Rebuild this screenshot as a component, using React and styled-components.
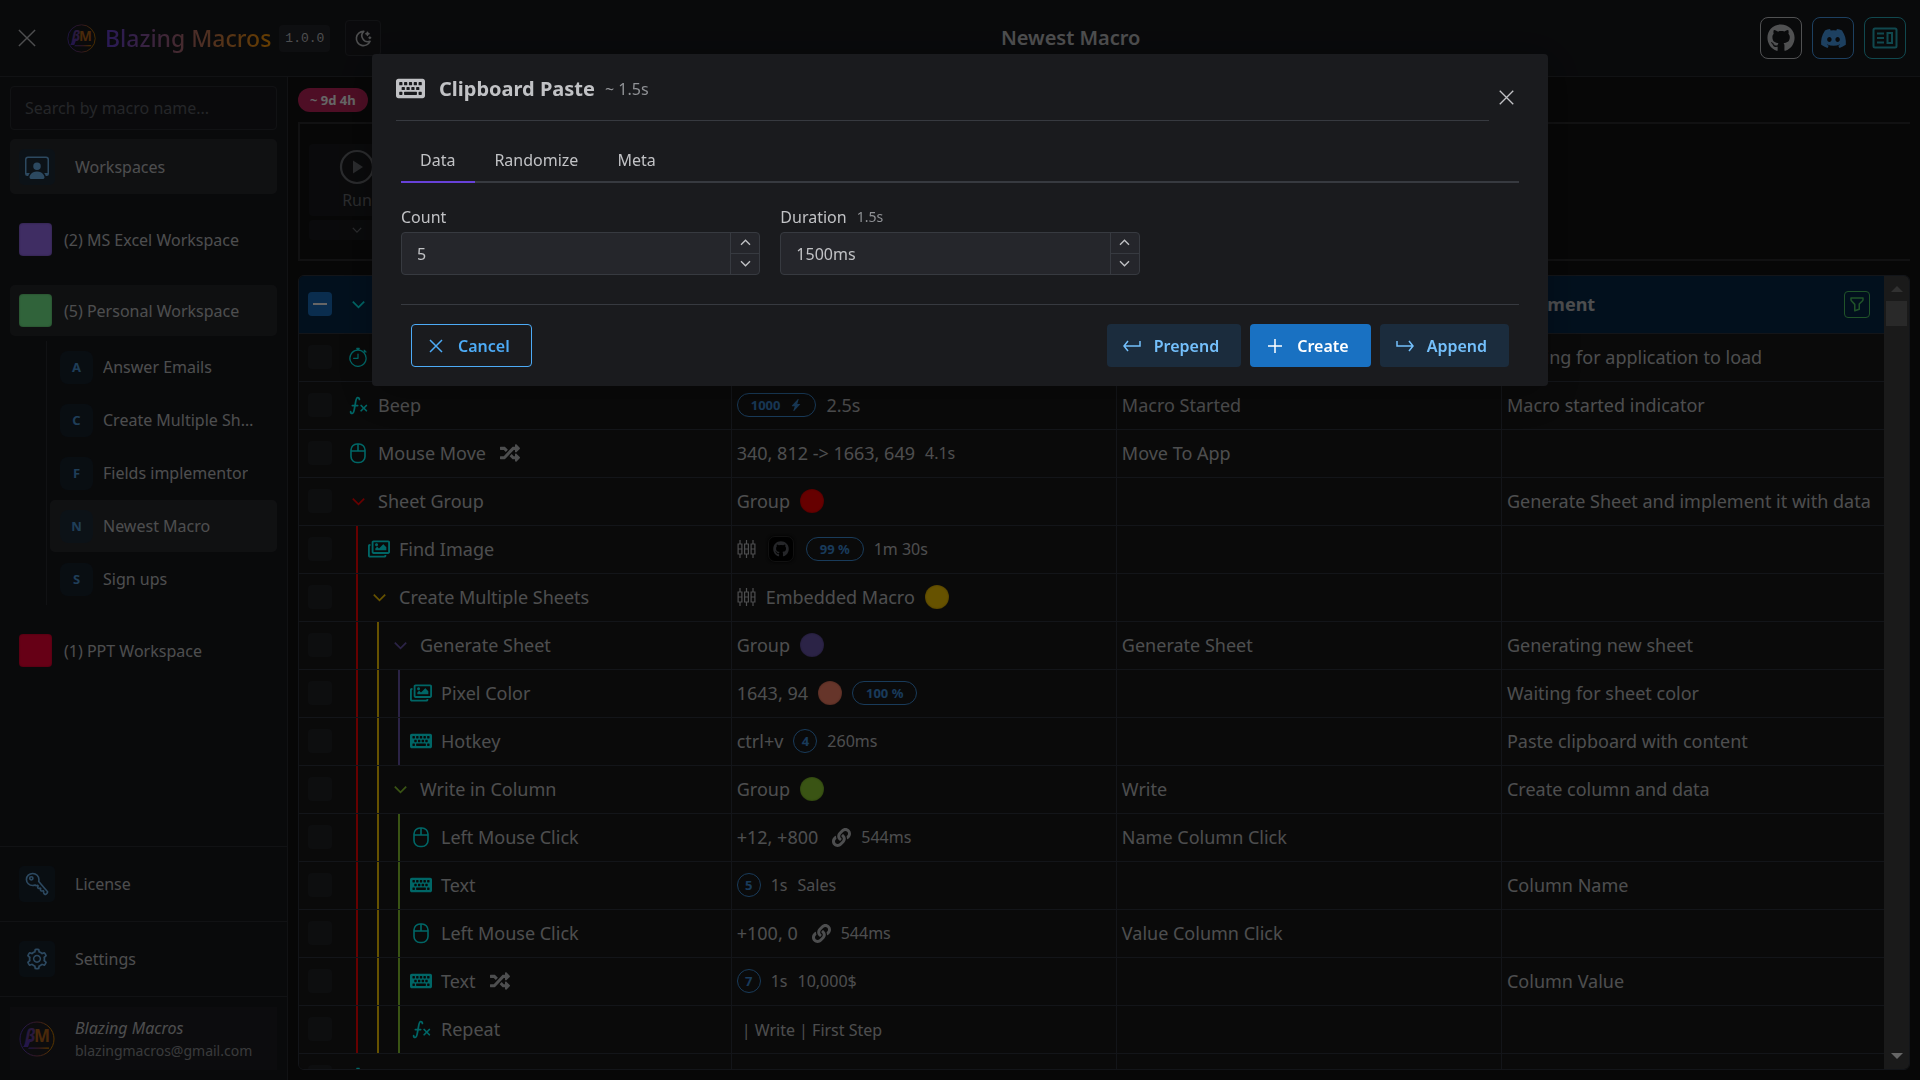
import React from "react";
import styled, { createGlobalStyle, css } from "styled-components";
import { FaGithub, FaDiscord, FaKeyboard, FaRegImages, FaRandom, FaLink } from "react-icons/fa";
import { BsStopwatch, BsPersonWorkspace, BsLightningChargeFill } from "react-icons/bs";
import { TbMathFunction, TbFilter, TbMoonStars } from "react-icons/tb";
import { IoKeyOutline } from "react-icons/io5";
import { AiOutlineSetting } from "react-icons/ai";

const c = {
  text: "#c1c2c5",
  dim: "#909296",
  panel: "#1a1b1e",
  page: "#121212",
  side: "#17191d",
  line: "#2c2e33",
  grid: "#30353f",
  field: "#25262b",
  edge: "#373a40",
  teal: "#00ffff",
  blue: "#4dabf6",
};

const Global = createGlobalStyle`
  *, *::before, *::after { box-sizing: border-box; }
  body { margin: 0; background: ${c.page}; color: ${c.text}; font: 16px/24px "Noto Sans", "Open Sans", sans-serif; }
  button, input { font: inherit; color: inherit; }
  button { cursor: pointer; padding: 0; border: 0; background: none; }
  h1, h2, p { margin: 0; }
  svg { display: block; flex: none; }
`;

const Shell = styled.div`
  display: flex;
  flex-direction: column;
  height: 100vh;
  overflow: hidden;
`;

const Header = styled.header`
  display: grid;
  grid-template-columns: auto 1fr auto;
  align-items: center;
  flex: none;
  height: 77px;
  padding: 0 14px 0 18px;
  background: ${c.side};
  border-bottom: 1px solid ${c.line};
`;

const Brand = styled.div`
  display: flex;
  align-items: center;
  white-space: nowrap;
`;

const PlainButton = styled.button`
  display: grid;
  place-items: center;
  margin-right: ${(p) => p.$after || 0}px;
`;

const BrandName = styled.span`
  margin: 0 8px 0 9px;
  font: 500 23px/32px "Noto Sans", sans-serif;
  background: linear-gradient(90deg, #6741d9, #ff9900);
  background-clip: text;
  color: transparent;
`;

const Version = styled.code`
  padding: 0 6px;
  border-radius: 4px;
  background: ${c.field};
  font: 13px/27px "Liberation Mono", monospace;
`;

const ThemeButton = styled.button`
  display: grid;
  place-items: center;
  flex: none;
  width: 36px;
  height: 36px;
  margin-left: 15px;
  border: 1px solid ${c.line};
  border-radius: 4px;
  background: ${c.panel};
`;

const PageTitle = styled.h1`
  justify-self: center;
  font-size: 20px;
  line-height: 28px;
  font-weight: 600;
`;

const Socials = styled.nav`
  display: flex;
  gap: 10px;
`;

const Social = styled.a`
  display: grid;
  place-items: center;
  width: 42px;
  height: 42px;
  border: 1px solid currentColor;
  border-radius: 8px;
  color: ${(p) => p.$tone};
`;

const Body = styled.div`
  display: grid;
  grid-template-columns: 288px minmax(0, 1fr);
  flex: 1;
  min-height: 0;
`;

const Sidebar = styled.aside`
  display: flex;
  flex-direction: column;
  min-height: 0;
  background: ${c.side};
  border-right: 1px solid ${c.line};
`;

const SideTop = styled.div`
  display: flex;
  flex-direction: column;
  flex: 1;
  padding: 9px 10px;
`;

const Search = styled.input`
  width: 100%;
  height: 44px;
  padding: 0 14px;
  border: 1px solid ${c.line};
  border-radius: 4px;
  background: ${c.panel};
  outline: 0;
  &::placeholder { color: #5c5f66; opacity: 1; }
`;

const SideLink = styled.button`
  display: flex;
  align-items: center;
  gap: 20px;
  width: 100%;
  height: ${(p) => p.$h || 36}px;
  padding: 0 9px;
  border-radius: 5px;
  background: ${(p) => (p.$on ? "#2a2b2e" : "none")};
  text-align: left;
`;

const IconTile = styled.span`
  display: grid;
  place-items: center;
  width: 36px;
  height: 36px;
  border-radius: 5px;
  background: ${(p) => (p.$on ? "#1f2d3a" : "#17232f")};
  color: #6fb6f0;
`;

const KeyIcon = styled(IoKeyOutline)`
  transform: scaleX(-1);
`;

const Workspaces = styled.div`
  display: flex;
  flex-direction: column;
  gap: 20px;
  margin-top: 9px;
`;

const Workspace = styled.button`
  display: flex;
  align-items: center;
  gap: 12px;
  width: 100%;
  height: 51px;
  padding: 0 9px;
  border-radius: 5px;
  background: ${(p) => (p.$on ? "#27282c" : "none")};
  text-align: left;
`;

const Swatch = styled.span`
  width: 33px;
  height: 33px;
  border-radius: 4px;
  background: ${(p) => p.$tone};
  box-shadow: inset 0 0 2px rgba(0, 0, 0, 0.4);
`;

const Macros = styled.div`
  display: flex;
  flex-direction: column;
  gap: 1px;
  margin: 5px 0 0 36px;
  padding-left: 3px;
  border-left: 1px solid ${c.line};
`;

const Macro = styled.button`
  display: flex;
  align-items: center;
  gap: 10px;
  height: 52px;
  padding: 0 15px 0 10px;
  border-radius: 5px;
  background: ${(p) => (p.$on ? "#2a2b2e" : "none")};
  text-align: left;
`;

const Letter = styled.span`
  flex: none;
  width: 33px;
  border-radius: 8px;
  background: ${(p) => (p.$on ? "#1f2d3a" : "#17232f")};
  color: #4f9bdc;
  font-size: 13px;
  line-height: 33px;
  font-weight: 700;
  text-align: center;
`;

const Clip = styled.span`
  overflow: hidden;
  text-overflow: ellipsis;
  white-space: nowrap;
`;

const SideFoot = styled.div`
  padding: ${(p) => p.$pad};
  border-top: 1px solid ${c.line};
`;

const Account = styled.div`
  display: flex;
  align-items: center;
  gap: 20px;
  height: 63px;
  padding: 0 9px;
  background: #1f2023;
`;

const AccountText = styled.div`
  display: flex;
  flex-direction: column;
`;

const AccountName = styled.span`
  font-style: italic;
  line-height: 24px;
`;

const AccountMail = styled.span`
  font-size: 14px;
  line-height: 22px;
  color: ${c.dim};
`;

const Main = styled.main`
  display: flex;
  flex-direction: column;
  min-height: 0;
  padding: 11px 10px 10px;
`;

const TotalBadge = styled.span`
  align-self: flex-start;
  padding: 0 12px;
  border-radius: 12px;
  background: #c2255c;
  color: #fff;
  font-size: 13px;
  line-height: 24px;
  font-weight: 700;
`;

const Toolbar = styled.div`
  flex: none;
  display: flex;
  margin: 10px 0 14px;
  padding: 20px 9px 19px;
  border: solid #2c2c2e;
  border-width: 2px 0 2px 2px;
`;

const RunGroup = styled.div`
  display: flex;
  flex-direction: column;
  gap: 4px;
  width: 96px;
  color: #6b6d72;
`;

const RunButton = styled.button`
  display: flex;
  flex-direction: column;
  align-items: center;
  gap: 3px;
  height: 72px;
  padding-top: 5px;
  border-radius: 4px;
  background: ${c.panel};
`;

const RunMore = styled.button`
  display: grid;
  place-items: center;
  height: 20px;
  border-radius: 4px;
  background: ${c.panel};
`;

const TableFrame = styled.div`
  display: flex;
  flex: 1;
  min-height: 0;
  border: 1px solid ${c.grid};
  border-radius: 6px;
  overflow: hidden;
`;

const TableView = styled.div`
  flex: 1;
  min-width: 0;
  overflow: hidden;
`;

const Table = styled.table`
  width: 100%;
  table-layout: fixed;
  border-collapse: separate;
  border-spacing: 0;
  font-size: 18px;
  background: #191919;
`;

const cell = css`
  padding: 0;
  border-bottom: 1px solid ${c.grid};
  border-right: 1px solid ${c.grid};
  &:last-child { border-right: 0; }
`;

const Th = styled.th`
  ${cell}
  height: 58px;
  background: #07294a;
  font-weight: 700;
  text-align: left;
`;

const Td = styled.td`
  ${cell}
  height: 48px;
`;

const Line = styled.div`
  display: flex;
  align-items: center;
  gap: 10px;
  height: ${(p) => p.$h || 47}px;
  padding: 0 0 1px 5px;
  overflow: hidden;
  white-space: nowrap;
  line-height: 22px;
`;

const NameLine = styled(Line)`
  gap: 0;
  padding-left: 9px;
`;

const Check = styled.input`
  appearance: none;
  display: grid;
  place-items: center;
  flex: none;
  width: 24px;
  height: 24px;
  margin: 0 15px 0 0;
  border-radius: 4px;
  background: ${(p) => (p.$part ? "#1971c2" : "#222327")};
  &::before {
    content: "";
    width: 14px;
    height: 2px;
    background: ${(p) => (p.$part ? "#fff" : "transparent")};
  }
`;

const Guide = styled.span`
  align-self: stretch;
  flex: none;
  width: 21px;
  margin-bottom: -1px;
  padding-left: 9px;
  &::before {
    content: "";
    display: block;
    width: 2px;
    height: 100%;
    background: ${(p) => p.$tone};
  }
`;

const Slot = styled.span`
  display: grid;
  place-items: center;
  flex: none;
  width: 22px;
  margin-right: 9px;
  color: ${(p) => p.$tone || c.teal};
`;

const After = styled.span`
  margin-left: ${(p) => p.$gap}px;
`;

const Dot = styled.span`
  width: 24px;
  height: 24px;
  border-radius: 50%;
  background: ${(p) => p.$tone};
  box-shadow: inset 0 0 2px rgba(0, 0, 0, 0.4);
`;

const Pill = styled.span`
  display: flex;
  align-items: center;
  justify-content: center;
  gap: 10px;
  min-width: 24px;
  height: 24px;
  padding: 0 ${(p) => (p.$round ? 0 : 13)}px;
  border: 1px solid #3f93e0;
  border-radius: 12px;
  color: #3f93e0;
  font-size: 13px;
  font-weight: 700;
`;

const Small = styled.span`
  font-size: 16px;
`;

const Shot = styled.span`
  display: grid;
  place-items: center;
  width: 26px;
  height: 26px;
  margin: 0 2px;
  border-radius: 7px;
  border: 1px solid #2b2b2b;
  background: #000;
  color: #5d6066;
  box-shadow: 0 0 3px #000;
`;

const HeadEnd = styled.button`
  display: grid;
  place-items: center;
  width: 26px;
  height: 27px;
  margin: 0 14px 0 auto;
  border: 1px solid #51cf66;
  border-radius: 4px;
  color: #51cf66;
`;

const ScrollTrack = styled.div`
  display: flex;
  flex-direction: column;
  align-items: center;
  justify-content: space-between;
  width: 25px;
  padding: 10px 0;
  background: #424242;
`;

const ScrollHead = styled.div`
  display: flex;
  flex-direction: column;
  align-items: center;
  gap: 9px;
`;

const Thumb = styled.div`
  width: 21px;
  height: 25px;
  background: #686868;
`;

const Arrow = styled.div`
  border: 6px solid transparent;
  border-width: ${(p) => (p.$down ? "6px 6px 0" : "0 6px 6px")};
  border-color: ${(p) => (p.$down ? "#fff transparent transparent" : "transparent transparent #7a7a7a")};
`;

const Overlay = styled.div`
  position: fixed;
  inset: 0;
  display: flex;
  align-items: flex-start;
  justify-content: center;
  padding: 5vh 16px;
  background: rgba(0, 0, 0, 0.6);
`;

const Modal = styled.section`
  width: 100%;
  max-width: 1176px;
  padding: 0 24px 19px;
  border-radius: 4px;
  background: ${c.panel};
  box-shadow: 0 10px 40px rgba(0, 0, 0, 0.25);
`;

const ModalTop = styled.div`
  display: flex;
  align-items: center;
  gap: 10px;
  padding-top: 19px;
`;

const ModalHead = styled.div`
  display: flex;
  align-items: center;
  gap: 10px;
  flex: 1;
  height: 48px;
  padding-bottom: 16px;
  border-bottom: 1px solid ${c.edge};
`;

const ModalTitle = styled.h2`
  margin-left: 4px;
  font-size: 20px;
  line-height: 28px;
  font-weight: 700;
`;

const ModalBody = styled.div`
  padding: 0 5px;
`;

const Tabs = styled.div`
  display: flex;
  margin-top: 18px;
  border-bottom: 2px solid ${c.edge};
`;

const Tab = styled.button`
  height: 44px;
  margin-bottom: -2px;
  padding: 0 20px 0 19px;
  border-bottom: 2px solid ${(p) => (p.$on ? "#6741d9" : "transparent")};
`;

const Fields = styled.div`
  display: grid;
  grid-template-columns: repeat(3, minmax(0, 1fr));
  gap: 20px;
  padding: 22px 0 29px;
  border-bottom: 1px solid ${c.edge};
`;

const FieldLabel = styled.label`
  display: flex;
  align-items: center;
  gap: 10px;
  height: 24px;
  margin-bottom: 3px;
`;

const Hint = styled.span`
  color: ${c.dim};
  font-size: ${(p) => p.$size || 14}px;
`;

const NumberBox = styled.div`
  display: flex;
  height: 43px;
  border: 1px solid ${c.edge};
  border-radius: 4px;
  background: ${c.field};
`;

const NumberInput = styled.input`
  flex: 1;
  min-width: 0;
  padding: 0 15px;
  border: 0;
  outline: 0;
  background: none;
`;

const Steps = styled.div`
  display: grid;
  grid-template-rows: 1fr 1fr;
  width: 29px;
  border-left: 1px solid ${c.edge};
`;

const Step = styled.button`
  display: grid;
  place-items: center;
  &:first-child { border-bottom: 1px solid ${c.edge}; }
`;

const Actions = styled.div`
  display: flex;
  gap: 9px;
  padding: 19px 10px 0;
`;

const tones = {
  outline: css`border-color: ${c.blue}; color: ${c.blue}; margin-right: auto;`,
  light: css`background: #1b2c3d; color: #74c0fc;`,
  filled: css`background: #1971c2; color: #fff;`,
};

const Action = styled.button`
  display: flex;
  align-items: center;
  gap: 12px;
  height: 43px;
  padding: 0 21px 0 14px;
  border: 1px solid transparent;
  border-radius: 4px;
  font-weight: 600;
  ${(p) => tones[p.$tone]}
`;

const Stroke = ({ d, size = 20, width = 1.5 }) => (
  <svg width={size} height={size} viewBox="0 0 20 20" fill="none" stroke="currentColor" strokeWidth={width}>
    <path d={d} />
  </svg>
);
const Chevron = ({ size = 20, up, width = 1.8 }) => (
  <Stroke size={size} width={width} d={up ? "M4 13l6-6 6 6" : "M4 7l6 6 6-6"} />
);

const Logo = ({ size, id }) => (
  <svg width={size} height={size} viewBox="0 0 36 36">
    <defs>
      <linearGradient id={id}>
        <stop offset="0.1" stopColor="#5a38b8" />
        <stop offset="0.5" stopColor="#8a3f5a" />
        <stop offset="0.9" stopColor="#d98200" />
      </linearGradient>
    </defs>
    <circle cx="18" cy="18" r="17" fill="none" stroke={`url(#${id})`} strokeWidth="1" />
    <g fontFamily="Noto Sans" fontWeight="700" fontSize="17">
      <text x="6" y="21" fontStyle="italic" fill="#68409a">β</text>
      <text x="15" y="21" fill="#b8661a">M</text>
      <path d="M4 26l6-8h2l-3 8z" fill="#5a38b8" />
      <path d="M10 26.500h20v1.200H9z" fill={`url(#${id})`} />
    </g>
  </svg>
);

const MouseIcon = () => (
  <svg width="22" height="22" viewBox="0 0 22 22" fill="none" stroke="currentColor" strokeWidth="1.600">
    <rect x="4" y="2" width="14" height="18.500" rx="6" />
    <path d="M4 9h14M11 2v7" />
  </svg>
);

const NewsIcon = () => (
  <svg width="26" height="22" viewBox="0 0 26 22" fill="none" stroke="currentColor" strokeWidth="2">
    <rect x="1.500" y="1.500" width="23" height="19" rx="1.500" />
    <rect x="15.500" y="6" width="4.500" height="10" />
    <path d="M5 6.500h7M5 11h7M5 15.500h7" />
  </svg>
);

const KnobsIcon = () => (
  <svg width="19" height="18" viewBox="0 0 19 18" fill="none" stroke="currentColor" strokeWidth="1.200">
    {[3, 9.5, 16].map((x) => (
      <path key={x} d={`M${x} 0v4M${x} 14v4M${x - 1.9} 4h3.800v10h-3.800zM${x - 1.9} 9h3.800`} />
    ))}
  </svg>
);

const RunIcon = () => (
  <svg width="36" height="36" viewBox="0 0 36 36">
    <circle cx="18" cy="18" r="16" fill="none" stroke="currentColor" strokeWidth="2.200" />
    <path d="M14 11.500v13l10-6.500z" fill="currentColor" />
  </svg>
);

const red = "#ff0000", gold = "#ffcc00", violet = "#6c58b0", lime = "#91d232";
const icons = {
  wait: <BsStopwatch size={20} />,
  fx: <TbMathFunction size={21} />,
  mouse: <MouseIcon />,
  image: <FaRegImages size={22} />,
  keys: <FaKeyboard size={22} />,
  fold: <Chevron size={19} />,
};
const Shuffle = () => <After $gap={14}><FaRandom size={20} /></After>;

const rows = [
  { icon: "wait", note: "Waiting for application to load" },
  { icon: "fx", name: "Beep", data: <><Pill>1000 <BsLightningChargeFill size={12} /></Pill>2.5s</>, label: "Macro Started", note: "Macro started indicator" },
  { icon: "mouse", name: "Mouse Move", random: true, data: <>340, 812 -&gt; 1663, 649 <Small>4.1s</Small></>, label: "Move To App" },
  { icon: "fold", tone: red, name: "Sheet Group", data: <>Group <Dot $tone={red} /></>, note: "Generate Sheet and implement it with data" },
  { icon: "image", guides: [red], name: "Find Image", data: <><KnobsIcon /><Shot><FaGithub size={16} /></Shot><Pill>99 %</Pill><Small>1m 30s</Small></> },
  { icon: "fold", tone: gold, guides: [red], name: "Create Multiple Sheets", data: <><KnobsIcon />Embedded Macro <Dot $tone={gold} /></> },
  { icon: "fold", tone: violet, guides: [red, gold], name: "Generate Sheet", data: <>Group <Dot $tone={violet} /></>, label: "Generate Sheet", note: "Generating new sheet" },
  { icon: "image", guides: [red, gold, violet], name: "Pixel Color", data: <>1643, 94 <Dot $tone="#ff8569" /><Pill>100 %</Pill></>, note: "Waiting for sheet color" },
  { icon: "keys", guides: [red, gold, violet], name: "Hotkey", data: <>ctrl+v <Pill $round>4</Pill><Small>260ms</Small></>, note: "Paste clipboard with content" },
  { icon: "fold", tone: lime, guides: [red, gold], name: "Write in Column", data: <>Group <Dot $tone={lime} /></>, label: "Write", note: "Create column and data" },
  { icon: "mouse", guides: [red, gold, lime], name: "Left Mouse Click", data: <>+12, +800 <After $gap={4}><FaLink size={19} /></After><Small>544ms</Small></>, label: "Name Column Click" },
  { icon: "keys", guides: [red, gold, lime], name: "Text", data: <><Pill $round>5</Pill><Small>1s</Small><Small>Sales</Small></>, note: "Column Name" },
  { icon: "mouse", guides: [red, gold, lime], name: "Left Mouse Click", data: <>+100, 0 <After $gap={4}><FaLink size={19} /></After><Small>544ms</Small></>, label: "Value Column Click" },
  { icon: "keys", guides: [red, gold, lime], name: "Text", random: true, data: <><Pill $round>7</Pill><Small>1s</Small><Small>10,000$</Small></>, note: "Column Value" },
  { icon: "fx", guides: [red, gold, lime], name: "Repeat", data: <After $gap={5}><Small>| Write | First Step</Small></After> },
  { icon: "wait" },
];

const macros = ["Answer Emails", "Create Multiple Sheets", "Fields implementor", "Newest Macro", "Sign ups"];

const NumberField = ({ id, label, hint, value }) => (
  <div>
    <FieldLabel htmlFor={id}>{label}{hint && <Hint>{hint}</Hint>}</FieldLabel>
    <NumberBox>
      <NumberInput id={id} defaultValue={value} />
      <Steps>
        <Step aria-label={`Increase ${label}`}><Chevron size={15} up /></Step>
        <Step aria-label={`Decrease ${label}`}><Chevron size={15} /></Step>
      </Steps>
    </NumberBox>
  </div>
);

export default function App() {
  return (
    <>
      <Global />
      <Shell>
        <Header>
          <Brand>
            <PlainButton $after={31} aria-label="Close menu"><Stroke size={18} width={1.6} d="M1 1l18 18M19 1L1 19" /></PlainButton>
            <Logo size={29} id="logoTop" />
            <BrandName>Blazing Macros</BrandName>
            <Version>1.0.0</Version>
            <ThemeButton aria-label="Dark theme"><TbMoonStars size={19} /></ThemeButton>
          </Brand>
          <PageTitle>Newest Macro</PageTitle>
          <Socials>
            <Social href="#github" aria-label="GitHub" $tone="#c9cbce"><FaGithub size={28} /></Social>
            <Social href="#discord" aria-label="Discord" $tone="#4aa0f0"><FaDiscord size={27} /></Social>
            <Social href="#docs" aria-label="Docs" $tone="#2ab5c4"><NewsIcon /></Social>
          </Socials>
        </Header>
        <Body>
          <Sidebar>
            <SideTop>
              <Search placeholder="Search by macro name..." aria-label="Search by macro name" />
              <Workspaces>
                <SideLink $h={55} $on>
                  <IconTile $on><BsPersonWorkspace size={24} /></IconTile>Workspaces
                </SideLink>
                <Workspace><Swatch $tone="#9d70f7" />(2) MS Excel Workspace</Workspace>
                <div>
                  <Workspace $on><Swatch $tone="#78f791" />(5) Personal Workspace</Workspace>
                  <Macros>
                    {macros.map((m) => {
                      const on = m === "Newest Macro";
                      return <Macro key={m} $on={on}><Letter $on={on}>{m[0]}</Letter><Clip>{m}</Clip></Macro>;
                    })}
                  </Macros>
                </div>
                <Workspace><Swatch $tone="#ff0037" />(1) PPT Workspace</Workspace>
              </Workspaces>
            </SideTop>
            <SideFoot $pad="19px 10px"><SideLink><IconTile><KeyIcon size={26} /></IconTile>License</SideLink></SideFoot>
            <SideFoot $pad="19px 10px"><SideLink><IconTile><AiOutlineSetting size={24} /></IconTile>Settings</SideLink></SideFoot>
            <SideFoot $pad="10px">
              <Account>
                <Logo size={36} id="logoUser" />
                <AccountText><AccountName>Blazing Macros</AccountName><AccountMail>blazingmacros@gmail.com</AccountMail></AccountText>
              </Account>
            </SideFoot>
          </Sidebar>
          <Main>
            <TotalBadge>~ 9d 4h</TotalBadge>
            <Toolbar>
              <RunGroup>
                <RunButton><RunIcon />Run</RunButton>
                <RunMore aria-label="Run options"><Chevron size={14} /></RunMore>
              </RunGroup>
            </Toolbar>
            <TableFrame>
              <TableView>
                <Table>
                  <colgroup><col width="27.3%" /><col width="24.3%" /><col width="24.3%" /><col /></colgroup>
                  <thead>
                    <tr>
                      <Th><NameLine $h={57}><Check type="checkbox" $part aria-label="Select all" /><Slot><Chevron size={19} /></Slot></NameLine></Th>
                      <Th aria-label="Data" />
                      <Th aria-label="Name" />
                      <Th><Line $h={57}>Comment<HeadEnd aria-label="Filter"><TbFilter size={18} /></HeadEnd></Line></Th>
                    </tr>
                  </thead>
                  <tbody>
                    {rows.map((r, i) => (
                      <tr key={i}>
                        <Td>
                          <NameLine>
                            <Check type="checkbox" aria-label={`Select row ${i + 1}`} />
                            {(r.guides || []).map((g) => <Guide key={g} $tone={g} />)}
                            <Slot $tone={r.tone}>{icons[r.icon]}</Slot>
                            {r.name}
                            {r.random && <Shuffle />}
                          </NameLine>
                        </Td>
                        <Td><Line>{r.data}</Line></Td>
                        <Td><Line>{r.label}</Line></Td>
                        <Td><Line>{r.note}</Line></Td>
                      </tr>
                    ))}
                  </tbody>
                </Table>
              </TableView>
              <ScrollTrack aria-hidden="true">
                <ScrollHead><Arrow /><Thumb /></ScrollHead>
                <Arrow $down />
              </ScrollTrack>
            </TableFrame>
          </Main>
        </Body>
      </Shell>
      <Overlay>
        <Modal role="dialog" aria-modal="true" aria-labelledby="dialog-title">
          <ModalTop>
            <ModalHead>
              <FaKeyboard size={29} />
              <ModalTitle id="dialog-title">Clipboard Paste</ModalTitle>
              <Hint $size={16}>~ 1.5s</Hint>
            </ModalHead>
            <PlainButton $after={10} aria-label="Close"><Stroke size={15} width={1.8} d="M1 1l18 18M19 1L1 19" /></PlainButton>
          </ModalTop>
          <ModalBody>
            <Tabs role="tablist">
              <Tab role="tab" aria-selected="true" $on>Data</Tab>
              <Tab role="tab">Randomize</Tab>
              <Tab role="tab">Meta</Tab>
            </Tabs>
            <Fields>
              <NumberField id="count" label="Count" value="5" />
              <NumberField id="duration" label="Duration" hint="1.5s" value="1500ms" />
            </Fields>
            <Actions>
              <Action $tone="outline"><Stroke d="M4 4l12 12M16 4L4 16" />Cancel</Action>
              <Action $tone="light"><Stroke d="M6 5L2 10l4 5M2 10h16V5" />Prepend</Action>
              <Action $tone="filled"><Stroke d="M10 3v14M3 10h14" />Create</Action>
              <Action $tone="light"><Stroke d="M14 5l4 5-4 5M18 10H2V5" />Append</Action>
            </Actions>
          </ModalBody>
        </Modal>
      </Overlay>
    </>
  );
}
